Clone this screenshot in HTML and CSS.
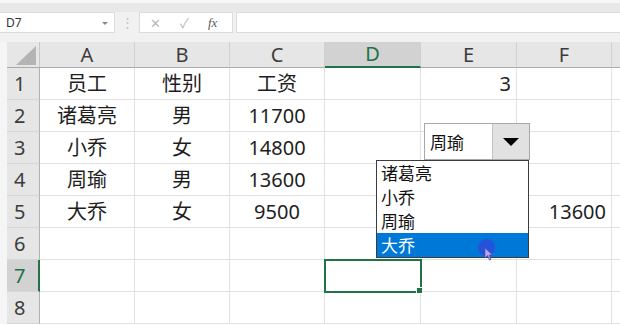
FILE: index.html
```html
<!DOCTYPE html>
<html lang="zh-CN">
<head>
    <meta charset="UTF-8">
    <link rel="stylesheet" href="styles.css">
    <title>Sheet1</title>
</head>
<body>
    <div class="topbar"></div>
    <div class="formula-row">
        <div class="name-box">D7<span class="name-arrow"></span></div>
        <div class="grip">⋮</div>
        <div class="fx-box">
            <span class="fx-icon">✕</span>
            <span class="fx-icon">✓</span>
            <span class="fx-label">fx</span>
        </div>
        <div class="formula-input"></div>
    </div>

    <div class="sheet">
        <div class="grid">
            <!-- header row -->
            <div class="edge"></div>
            <div class="corner"><span class="corner-tri"></span></div>
            <div class="col-head">A</div>
            <div class="col-head">B</div>
            <div class="col-head">C</div>
            <div class="col-head active">D</div>
            <div class="col-head">E</div>
            <div class="col-head">F</div>
            <div class="col-head last"></div>

            <div class="edge"></div>
            <div class="row-head">1</div>
            <div class="cell">员工</div>
            <div class="cell">性别</div>
            <div class="cell">工资</div>
            <div class="cell"></div>
            <div class="cell num">3</div>
            <div class="cell"></div>
            <div class="cell last"></div>

            <div class="edge"></div>
            <div class="row-head">2</div>
            <div class="cell">诸葛亮</div>
            <div class="cell">男</div>
            <div class="cell">11700</div>
            <div class="cell"></div>
            <div class="cell"></div>
            <div class="cell"></div>
            <div class="cell last"></div>

            <div class="edge"></div>
            <div class="row-head">3</div>
            <div class="cell">小乔</div>
            <div class="cell">女</div>
            <div class="cell">14800</div>
            <div class="cell"></div>
            <div class="cell"></div>
            <div class="cell"></div>
            <div class="cell last"></div>

            <div class="edge"></div>
            <div class="row-head">4</div>
            <div class="cell">周瑜</div>
            <div class="cell">男</div>
            <div class="cell">13600</div>
            <div class="cell"></div>
            <div class="cell"></div>
            <div class="cell"></div>
            <div class="cell last"></div>

            <div class="edge"></div>
            <div class="row-head">5</div>
            <div class="cell">大乔</div>
            <div class="cell">女</div>
            <div class="cell">9500</div>
            <div class="cell"></div>
            <div class="cell"></div>
            <div class="cell num">13600</div>
            <div class="cell last"></div>

            <div class="edge"></div>
            <div class="row-head">6</div>
            <div class="cell"></div>
            <div class="cell"></div>
            <div class="cell"></div>
            <div class="cell"></div>
            <div class="cell"></div>
            <div class="cell"></div>
            <div class="cell last"></div>

            <div class="edge"></div>
            <div class="row-head active">7</div>
            <div class="cell"></div>
            <div class="cell"></div>
            <div class="cell"></div>
            <div class="cell selected"><span class="fill-handle"></span></div>
            <div class="cell"></div>
            <div class="cell"></div>
            <div class="cell last"></div>

            <div class="edge"></div>
            <div class="row-head">8</div>
            <div class="cell"></div>
            <div class="cell"></div>
            <div class="cell"></div>
            <div class="cell"></div>
            <div class="cell"></div>
            <div class="cell"></div>
            <div class="cell last"></div>
        </div>

        <!-- combo box control over E3 -->
        <div class="combo">
            <div class="combo-text">周瑜</div>
            <div class="combo-btn"><span class="combo-tri"></span></div>
        </div>
        <ul class="combo-list">
            <li>诸葛亮</li>
            <li>小乔</li>
            <li>周瑜</li>
            <li class="picked">大乔</li>
        </ul>
        <span class="click-dot"></span>
        <svg class="pointer" width="10" height="14" viewBox="0 0 10 14">
            <path d="M1 1 L1 11 L3.5 8.5 L5.5 13 L7 12.3 L5 8 L8.5 8 Z" fill="#b9a8f0" stroke="#5a4fb0" stroke-width="0.8"/>
        </svg>
    </div>
</body>
</html>
```

FILE: styles.css
```css
body {
    margin: 0;
    width: 620px;
    height: 325px;
    overflow: hidden;
    background: #ffffff;
    font-family: "Noto Sans", "Noto Sans CJK SC", sans-serif;
}
.topbar {
    height: 9px;
    border-top: 3px solid #f7f7f7;
    background-color: #e8e8e8;
}
.formula-row {
    display: flex;
    align-items: stretch;
    height: 21px;
    padding-bottom: 9px;
    background-color: #f1f1f1;
}
.name-box {
    position: relative;
    width: 108px;
    padding-left: 6px;
    background: #ffffff;
    border: 1px solid #dcdcdc;
    border-left: none;
    font-size: 12px;
    line-height: 19px;
    color: #333;
}
.name-arrow {
    position: absolute;
    right: 6px;
    top: 9px;
    border-left: 3px solid transparent;
    border-right: 3px solid transparent;
    border-top: 3px solid #888;
}
.grip {
    width: 24px;
    text-align: center;
    color: #c4c4c4;
    font-size: 13px;
    line-height: 21px;
}
.fx-box {
    display: flex;
    align-items: center;
    width: 92px;
    margin-right: 3px;
    background: #ffffff;
    border: 1px solid #dcdcdc;
}
.fx-icon {
    width: 27px;
    text-align: center;
    color: #b8b8b8;
    font-size: 13px;
    margin-left: 2px;
}
.fx-label {
    margin-left: 10px;
    color: #5a5a5a;
    font-family: "Liberation Serif", serif;
    font-style: italic;
    font-size: 13px;
}
.formula-input {
    flex: 1;
    background: #ffffff;
    border: 1px solid #dcdcdc;
    border-right: none;
}
.sheet {
    position: relative;
}
.grid {
    display: grid;
    grid-template-columns: 7px 33px 95px 95px 95px 96px 96px 95px 1fr;
    grid-template-rows: 26px repeat(8, 32px);
    font-size: 20px;
    color: #1e1e1e;
}
.edge {
    background-color: #f5f5f5;
}
.corner {
    position: relative;
    background-color: #e6e6e6;
    border-right: 1px solid #c8c8c8;
    border-bottom: 1px solid #a9a9a9;
}
.corner-tri {
    position: absolute;
    right: 3px;
    bottom: 2px;
    border-left: 20px solid transparent;
    border-bottom: 19px solid #b4b4b4;
}
.col-head {
    background-color: #e6e6e6;
    border-right: 1px solid #d0d0d0;
    border-bottom: 1px solid #a9a9a9;
    text-align: center;
    line-height: 25px;
    color: #3c3c3c;
}
.col-head.active {
    background-color: #d2d2d2;
    color: #217346;
    border-bottom: 2px solid #217346;
    line-height: 24px;
}
.col-head.last {
    border-right: none;
}
.row-head {
    background-color: #e6e6e6;
    border-right: 1px solid #b0b0b0;
    border-bottom: 1px solid #d6d6d6;
    padding-left: 7px;
    line-height: 31px;
    color: #3c3c3c;
}
.row-head.active {
    background-color: #d2d2d2;
    color: #217346;
    border-right: 2px solid #217346;
}
.cell {
    position: relative;
    border-right: 1px solid #e1e1e1;
    border-bottom: 1px solid #e1e1e1;
    text-align: center;
    line-height: 31px;
}
.cell.num {
    text-align: right;
    padding-right: 5px;
}
.cell.last {
    border-right: none;
}
.cell.selected {
    outline: 2px solid #217346;
    outline-offset: -1px;
    z-index: 1;
}
.fill-handle {
    position: absolute;
    right: -3px;
    bottom: -3px;
    width: 5px;
    height: 5px;
    background: #217346;
    border: 1px solid #ffffff;
}
.combo {
    position: absolute;
    left: 424px;
    top: 81px;
    width: 104px;
    height: 35px;
    display: flex;
    background: #ffffff;
    border: 1px solid #a8a8a8;
    font-family: "Noto Sans CJK SC", sans-serif;
}
.combo-text {
    flex: 1;
    padding-left: 5px;
    font-size: 17px;
    line-height: 35px;
    color: #111;
}
.combo-btn {
    width: 36px;
    background-color: #e1e1e1;
    border-left: 1px solid #c4c4c4;
    display: flex;
    align-items: center;
    justify-content: center;
}
.combo-tri {
    border-left: 8px solid transparent;
    border-right: 8px solid transparent;
    border-top: 8px solid #000000;
}
.combo-list {
    position: absolute;
    left: 376px;
    top: 118px;
    width: 151px;
    margin: 0;
    padding: 0;
    list-style: none;
    background: #ffffff;
    border: 1px solid #3c3c3c;
    font-family: "Noto Sans CJK SC", sans-serif;
    font-size: 17px;
    color: #111;
}
.combo-list li {
    height: 24px;
    line-height: 23px;
    padding-left: 4px;
}
.combo-list li.picked {
    background-color: #0078d7;
    color: #ffffff;
}
.click-dot {
    position: absolute;
    left: 478px;
    top: 197px;
    width: 17px;
    height: 17px;
    border-radius: 50%;
    background: rgba(50, 70, 220, 0.75);
}
.pointer {
    position: absolute;
    left: 484px;
    top: 205px;
}
```
